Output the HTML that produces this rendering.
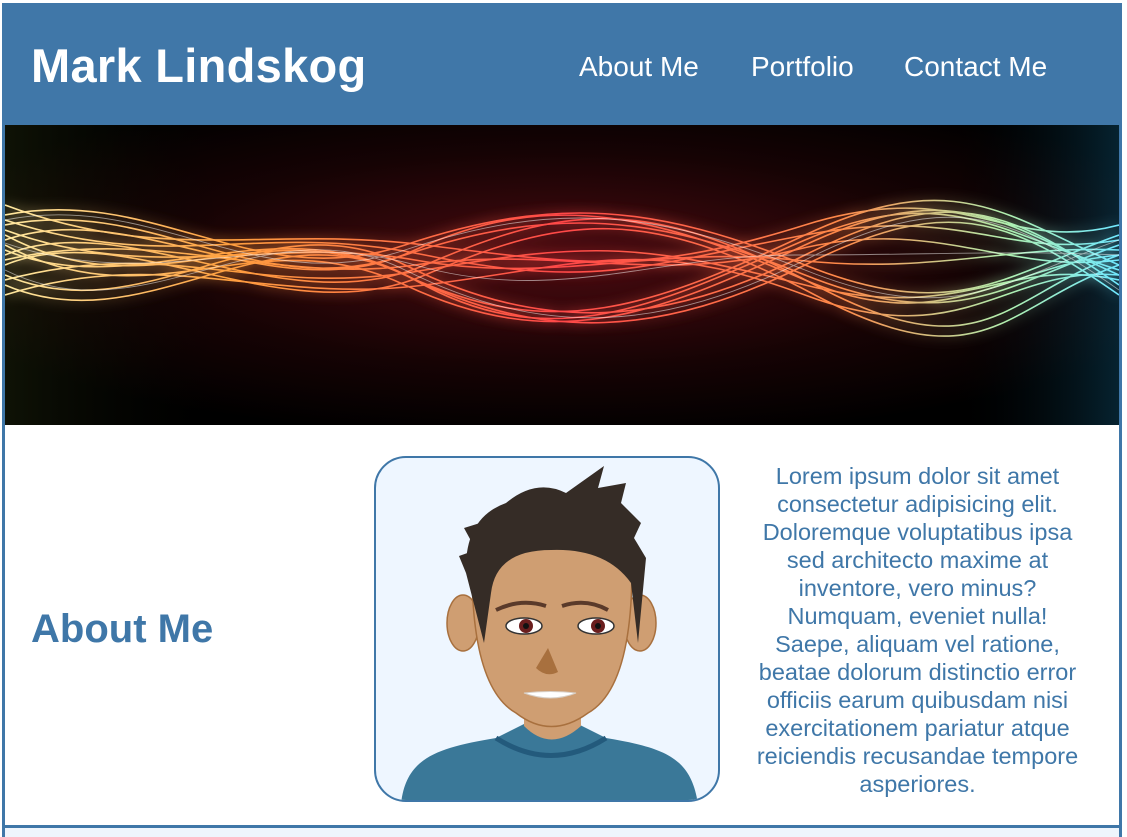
<!DOCTYPE html>
<html><head><meta charset="utf-8"><style>
*{margin:0;padding:0;box-sizing:border-box}
body{width:1127px;height:837px;background:#fff;font-family:"Liberation Sans",Arial,sans-serif;overflow:hidden;position:relative}
.frame{position:absolute;left:2px;top:3px;width:1120px;height:825px;border:3px solid #3f77a8;border-top:0;background:#fff}
header{position:absolute;left:2px;top:3px;width:1120px;height:122px;background:#4077a8}
h1{position:absolute;left:29px;top:35px;font-size:47px;color:#fff;font-weight:bold;letter-spacing:0.3px}
nav a{position:absolute;top:48px;color:#fff;font-size:28px;text-decoration:none}
.hero{position:absolute;left:5px;top:125px;width:1114px;height:300px;background:#000}
.about{position:absolute;left:31px;top:607px;font-size:40px;font-weight:bold;color:#3f77a8}
.avatar{position:absolute;left:374px;top:456px;width:346px;height:346px;border:2px solid #3f77a8;border-radius:32px;background:#eef6ff;overflow:hidden}
.txt{position:absolute;left:750px;top:462px;width:335px;text-align:center;color:#3f77a8;font-size:23.5px;line-height:28px}
.bottom{position:absolute;left:2px;top:825px;width:1120px;height:12px;border-top:3px solid #3f77a8;border-left:3px solid #3f77a8;border-right:3px solid #3f77a8;background:#eef5fc}
</style></head><body>
<div class="frame"></div>
<header><h1>Mark Lindskog</h1>
<nav><a style="left:577px">About Me</a><a style="left:749px">Portfolio</a><a style="left:902px">Contact Me</a></nav></header>
<div class="hero">
<svg width="1114" height="300" viewBox="0 0 1114 300">
<defs>
<linearGradient id="lg" x1="0" x2="1" y1="0" y2="0">
<stop offset="0" stop-color="#ffe9a0"/><stop offset="0.2" stop-color="#ffa040"/><stop offset="0.5" stop-color="#ff4848"/><stop offset="0.75" stop-color="#ff8a4a"/><stop offset="0.9" stop-color="#b0f0b0"/><stop offset="1" stop-color="#70e8ff"/></linearGradient>
<radialGradient id="rg" cx="0.5" cy="0.45" r="0.6"><stop offset="0" stop-color="#4a0a10"/><stop offset="0.6" stop-color="#160304"/><stop offset="1" stop-color="#000"/></radialGradient>
<linearGradient id="side" x1="0" x2="1"><stop offset="0" stop-color="#2a3410" stop-opacity=".35"/><stop offset=".2" stop-color="#000" stop-opacity="0"/><stop offset=".85" stop-color="#000" stop-opacity="0"/><stop offset="1" stop-color="#0a3a50" stop-opacity=".6"/></linearGradient>
<filter id="gl" x="-5%" y="-50%" width="110%" height="200%"><feGaussianBlur stdDeviation="6"/></filter>
</defs>
<rect width="1114" height="300" fill="url(#rg)"/>
<rect width="1114" height="300" fill="url(#side)"/>
<g id="w" fill="none" stroke="url(#lg)" stroke-width="1.6">
<path d="M0 90 C150 60 250 170 400 120 S650 80 800 140 S1000 150 1114 110"/>
<path d="M0 100 C150 70 250 180 400 130 S650 90 800 150 S1000 160 1114 120"/>
<path d="M0 110 C150 190 250 80 400 150 S650 180 800 110 S1000 90 1114 140"/>
<path d="M0 120 C150 200 250 90 400 160 S650 190 800 120 S1000 100 1114 150"/>
<path d="M0 130 C120 80 280 200 420 140 S640 70 810 160 S1000 170 1114 130"/>
<path d="M0 140 C120 90 280 210 420 150 S640 80 810 170 S1000 180 1114 140"/>
<path d="M0 150 C140 210 260 70 400 140 S660 200 800 130 S1000 80 1114 160"/>
<path d="M0 160 C140 220 260 80 400 150 S660 210 800 140 S1000 90 1114 170"/>
<path d="M0 80 C160 140 260 100 420 120 S640 150 800 100 S1000 130 1114 100"/>
<path d="M0 170 C160 120 260 180 420 160 S640 110 800 170 S1000 140 1114 150"/>
<path d="M0 105 C150 160 270 110 410 135 S650 120 790 135 S1000 120 1114 125"/>
<path d="M0 135 C150 100 270 160 410 140 S650 160 790 125 S1000 150 1114 135"/>
<path d="M0 115 C130 70 270 190 410 125 S660 95 800 155 S1000 140 1114 130"/>
<path d="M0 125 C130 180 270 75 410 155 S660 175 800 115 S1000 110 1114 145"/>
<path d="M0 95 C170 150 250 95 420 130 S640 140 800 110 S1000 135 1114 115"/>
<path d="M0 155 C170 110 250 175 420 145 S640 120 800 160 S1000 130 1114 155"/>
</g>
<use href="#w" filter="url(#gl)" opacity=".7"/>
<g fill="none" stroke="#fff" stroke-width=".9" opacity=".5">
<path d="M0 95 C150 65 250 175 400 125 S650 85 800 145 S1000 155 1114 115"/>
<path d="M0 145 C140 215 260 75 400 145 S660 205 800 135 S1000 85 1114 165"/>
<path d="M0 118 C150 170 270 100 410 140 S650 130 790 130 S1000 125 1114 130"/>
</g>
</svg></div>
<div class="about">About Me</div>
<div class="avatar">
<svg width="346" height="346" viewBox="0 0 346 346">
<path d="M25 346 C30 300 60 290 120 280 L150 265 L200 265 L230 280 C290 290 315 300 322 346Z" fill="#3a7898"/>
<path d="M120 280 Q175 315 230 280" fill="none" stroke="#235a7c" stroke-width="5"/>
<path d="M148 230 L148 268 Q175 295 205 268 L205 230Z" fill="#cf9e72"/>
<ellipse cx="87" cy="165" rx="16" ry="28" fill="#cf9e72" stroke="#a8703e" stroke-width="1.5"/>
<ellipse cx="264" cy="165" rx="16" ry="28" fill="#cf9e72" stroke="#a8703e" stroke-width="1.5"/>
<path d="M96 110 Q96 230 140 255 Q175 282 212 255 Q256 230 256 110 Q176 70 96 110Z" fill="#cf9e72" stroke="#a8703e" stroke-width="1.5"/>
<path d="M108 185 L90 115 Q88 60 130 45 Q160 20 190 35 L228 8 L222 30 L250 25 L245 45 L265 65 L258 80 L270 100 L262 185 L255 125 Q230 90 175 92 Q120 92 115 135Z" fill="#352c26"/>
<path d="M90 115 L83 98 L100 92 L88 70 L120 60 Z" fill="#352c26"/>
<path d="M120 152 Q145 140 170 148" stroke="#5a3a2a" stroke-width="4" fill="none"/>
<path d="M186 148 Q210 140 232 152" stroke="#5a3a2a" stroke-width="4" fill="none"/>
<ellipse cx="148" cy="168" rx="18" ry="8" fill="#fff" stroke="#333" stroke-width="1.5"/>
<ellipse cx="220" cy="168" rx="18" ry="8" fill="#fff" stroke="#333" stroke-width="1.5"/>
<circle cx="150" cy="168" r="7" fill="#6a1e1e"/><circle cx="222" cy="168" r="7" fill="#6a1e1e"/>
<circle cx="150" cy="168" r="3" fill="#111"/><circle cx="222" cy="168" r="3" fill="#111"/>
<path d="M172 190 L160 210 Q170 220 182 214Z" fill="#a8703e"/>
<path d="M148 235 Q175 245 200 235 Q175 232 148 235Z" fill="#fff" stroke="#d8d0c8"/>
</svg></div>
<div class="txt">Lorem ipsum dolor sit amet consectetur adipisicing elit. Doloremque voluptatibus ipsa sed architecto maxime at inventore, vero minus? Numquam, eveniet nulla! Saepe, aliquam vel ratione, beatae dolorum distinctio error officiis earum quibusdam nisi exercitationem pariatur atque reiciendis recusandae tempore asperiores.</div>
<div class="bottom"></div>
</body></html>
